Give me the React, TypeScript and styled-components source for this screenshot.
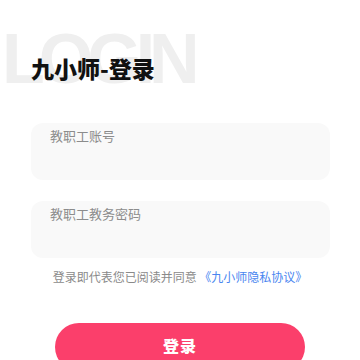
import React from 'react'
import styled, { createGlobalStyle } from 'styled-components'

const GlobalStyle = createGlobalStyle`
  html, body {
    margin: 0;
    padding: 0;
    background: #ffffff;
    font-family: "Noto Sans CJK SC", "Noto Sans", sans-serif;
  }
  * {
    box-sizing: border-box;
  }
`

const Page = styled.div`
  width: 360px;
  height: 360px;
  overflow: hidden;
  background: #ffffff;
`

const Header = styled.div`
  position: relative;
  height: 123px;
  padding: 53px 0 0 31px;
`

const Watermark = styled.div`
  position: absolute;
  left: 2px;
  top: 19px;
  font-family: "Liberation Sans", Arial, sans-serif;
  font-weight: 700;
  font-size: 70px;
  line-height: 80px;
  letter-spacing: -6px;
  color: #efefef;
  user-select: none;
`

const Title = styled.h1`
  position: relative;
  margin: 0;
  font-size: 23px;
  line-height: 30px;
  font-weight: 900;
  color: #111111;
`

const Form = styled.div`
  display: flex;
  flex-direction: column;
  gap: 21px;
  padding: 0 30px 0 31px;
`

const Field = styled.textarea`
  display: block;
  width: 100%;
  height: 57px;
  border: none;
  outline: none;
  resize: none;
  border-radius: 12px;
  background: #f9f9f9;
  padding: 3px 19px;
  font-family: "Noto Sans CJK SC", sans-serif;
  font-size: 13px;
  line-height: 20px;
  color: #333333;
  &::placeholder {
    color: #8c8c8c;
  }
`

const Agreement = styled.p`
  margin: 9px 0 0;
  text-align: center;
  font-size: 12px;
  line-height: 20px;
  color: #8a8a8a;
`

const Link = styled.a`
  color: #4a86f0;
  text-decoration: none;
`

const LoginButton = styled.button`
  display: block;
  width: 250px;
  height: 48px;
  margin: 36px auto 0;
  padding: 0 0 4px;
  border: none;
  border-radius: 24px;
  background: #fb3f6b;
  color: #ffffff;
  font-family: "Noto Sans CJK SC", sans-serif;
  font-size: 16px;
  font-weight: 900;
  letter-spacing: 1px;
  cursor: pointer;
`

export default function App() {
  return (
    <Page>
      <GlobalStyle />
      <Header>
        <Watermark>LOGIN</Watermark>
        <Title>九小师-登录</Title>
      </Header>
      <Form>
        <Field placeholder="教职工账号" />
        <Field placeholder="教职工教务密码" />
      </Form>
      <Agreement>
        登录即代表您已阅读并同意 <Link href="#">《九小师隐私协议》</Link>
      </Agreement>
      <LoginButton>登录</LoginButton>
    </Page>
  )
}
